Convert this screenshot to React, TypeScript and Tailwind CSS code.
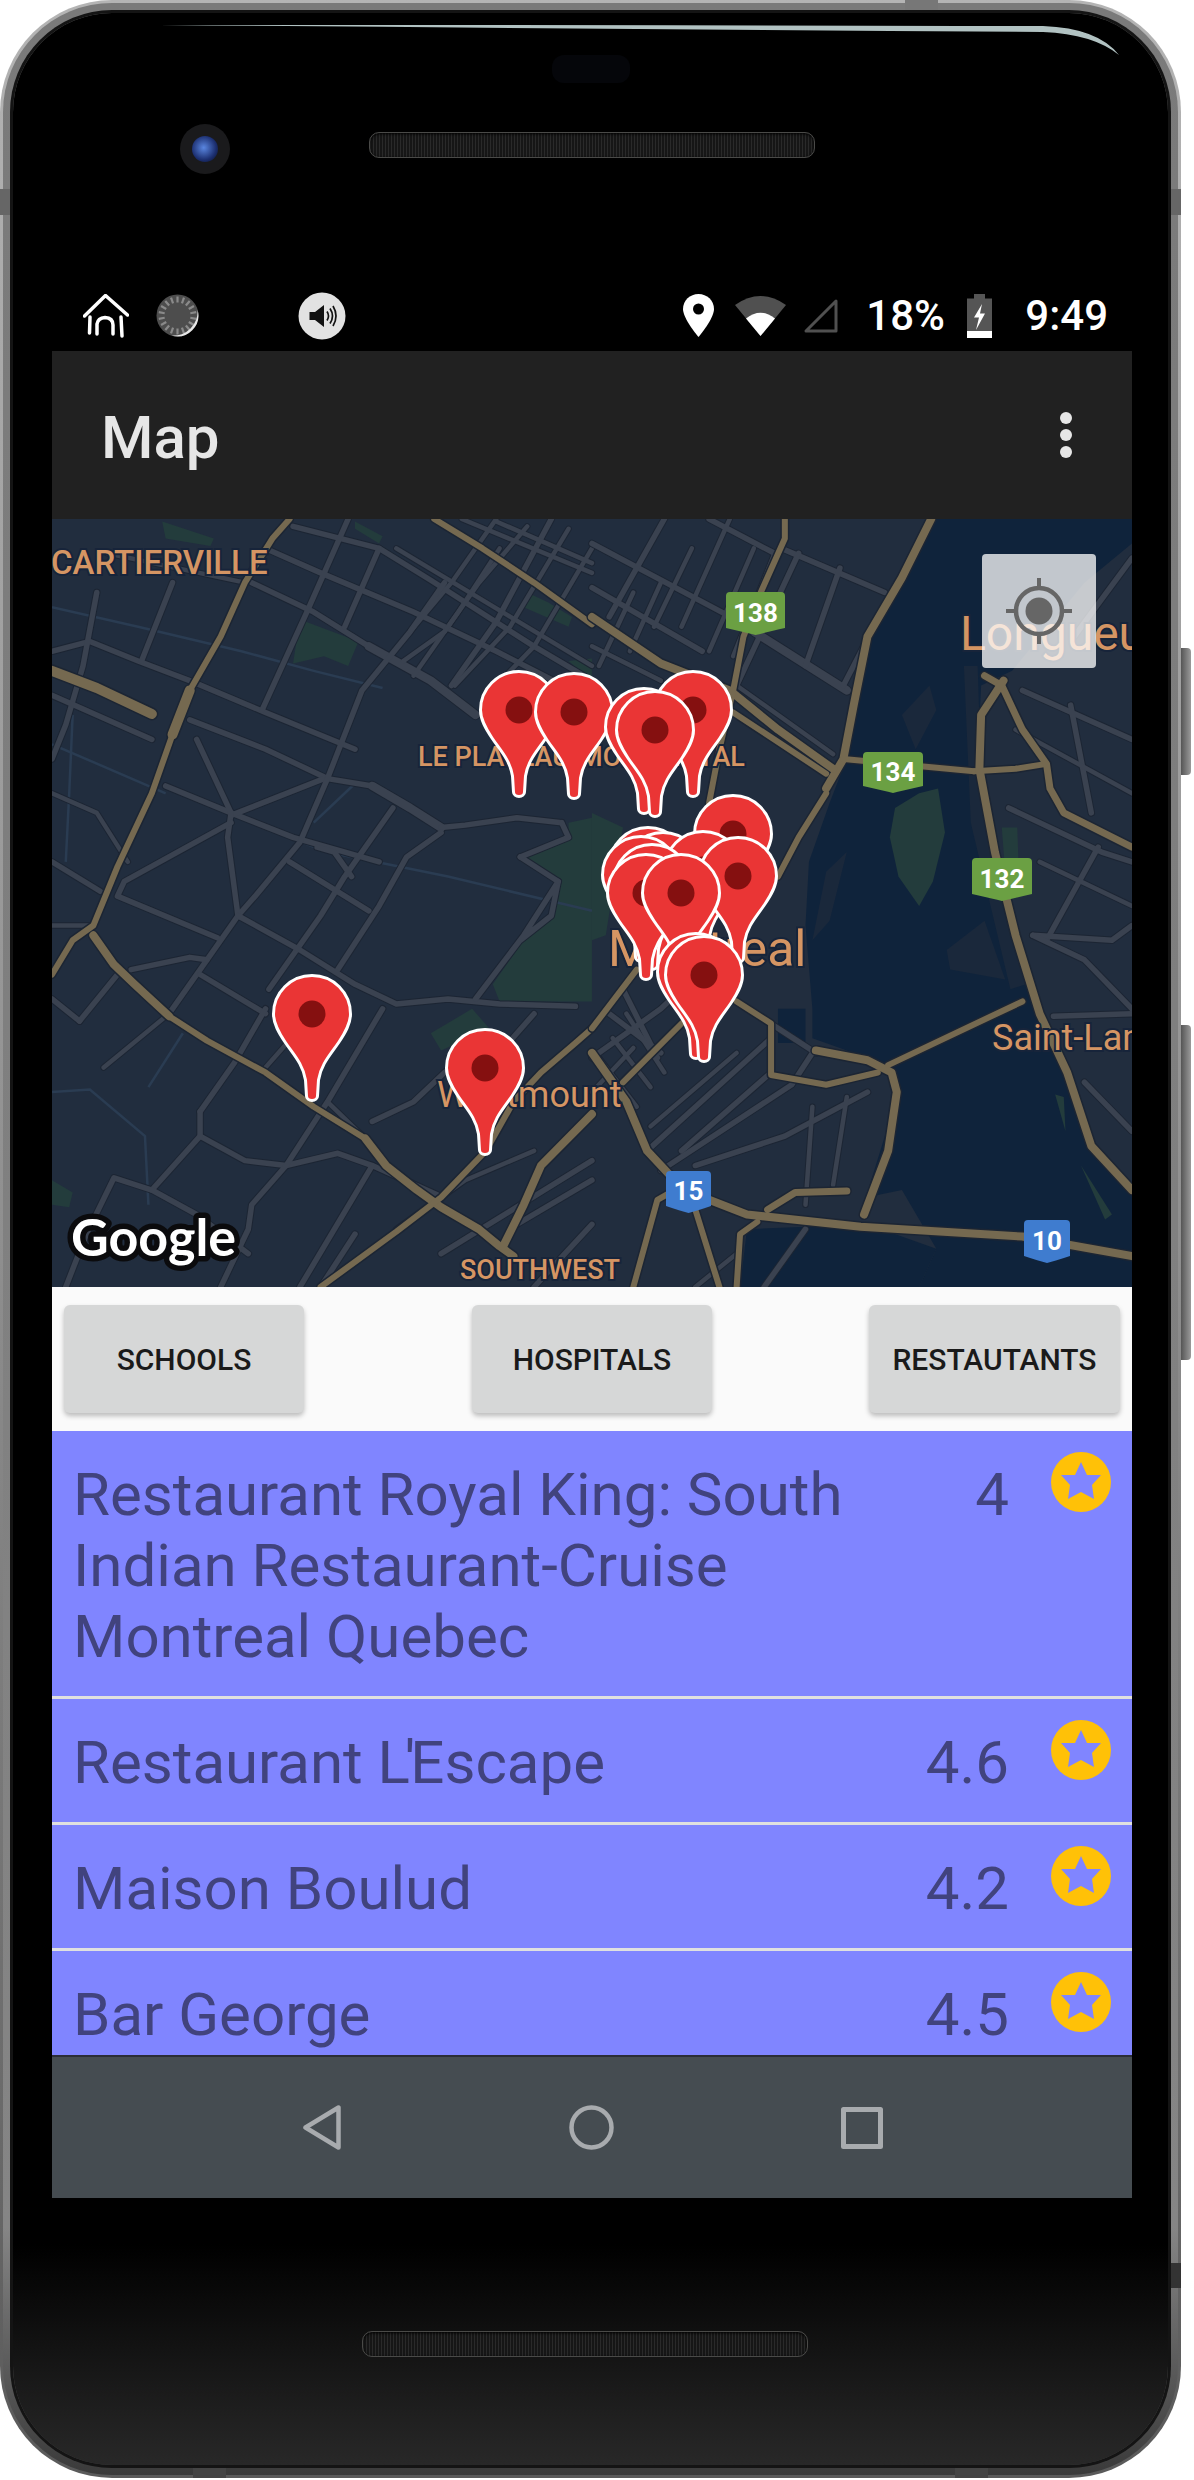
import React from "react";

const LAND = "#212d3e";
const ROAD = "#3a4250";
const HIGHWAY = "#756950";
const LABEL = "#d59563";
const HALO = "#17243a";

// traced from the map, one set per half of the map
const LEFT_PARKS = [
  "720,205 890,250 860,300 790,280 700,295",
  "1380,150 1440,170 1510,200 1500,220 1370,180",
  "320,5 470,40 460,55 330,40",
  "880,5 960,35 950,50 880,20",
  "1500,620 1568,610 1568,985 1300,985 1280,950 1370,860 1450,810 1478,740 1370,690 1500,650",
  "1100,1050 1220,1000 1270,1040 1130,1085",
  "0,1350 60,1375 50,1405 0,1400",
  "1500,290 1568,285 1568,330",
];

const LEFT_THIN = [
  "0,180 250,220 550,270 760,310 960,345",
  "0,460 330,560",
  "540,610 800,680 1150,730 1568,800",
  "0,1170 110,1165 270,1260 280,1400",
  "60,400 50,560 40,700",
  "760,620 880,540",
  "380,1050 280,1160",
];

const LEFT_ROADS: [number, string][] = [
  [4, "0,270 110,250 250,290 400,330 620,395 880,470"],
  [4, "400,410 620,470 800,530 930,545"],
  [7, "930,545 1040,590 1130,630"],
  [4, "1130,630 1200,625 1350,610 1480,620"],
  [4, "330,545 520,600 700,650 950,700"],
  [4, "520,605 790,530"],
  [4, "580,130 760,190 920,260"],
  [7, "920,260 1100,330 1230,400"],
  [4, "620,60 780,110 1050,190 1290,270 1568,370"],
  [4, "700,15 950,60 1100,125 1400,260 1568,330"],
  [4, "950,60 850,220"],
  [4, "860,0 740,190 610,390"],
  [4, "1450,0 1290,210 1160,340"],
  [4, "1140,130 1040,230 900,350 800,530 720,660 590,770 540,810 450,900 340,1010"],
  [4, "990,590 850,730 780,810 630,960"],
  [4, "1130,640 1030,690 950,790 830,920"],
  [4, "420,450 520,600 510,650 540,810"],
  [4, "520,620 210,740 190,770 480,855"],
  [4, "540,810 720,880 880,950 1000,990 1150,980 1300,990 1520,995"],
  [4, "770,670 820,680 870,730"],
  [4, "690,700 920,800"],
  [4, "230,920 400,895 450,900"],
  [4, "430,930 620,1010"],
  [4, "80,1025 0,980"],
  [4, "80,1025 190,930"],
  [4, "430,1260 560,1310 680,1320 830,1295 930,1320 1120,1380"],
  [4, "430,1210 530,1110 620,1000"],
  [4, "430,1210 430,1260 290,1370 180,1345 100,1460 40,1568"],
  [4, "290,1370 420,1420 570,1500"],
  [4, "960,1000 800,1190 680,1320 580,1400 570,1450 490,1568"],
  [4, "930,1320 720,1568"],
  [4, "930,1230 1050,1190 1140,1130"],
  [4, "1400,1010 1300,1090 1250,1180"],
  [4, "1230,980 1370,850 1470,740 1450,810 1360,860"],
  [4, "1360,690 1470,740"],
  [4, "1360,690 1500,650 1480,620"],
  [4, "0,700 140,760"],
  [4, "130,150 90,300 40,420 0,490"],
  [4, "350,130 260,290"],
  [4, "0,360 290,450"],
  [4, "780,1568 880,1460"],
  [4, "1130,1500 1568,1310"],
  [4, "1400,1568 1568,1440"],
  [4, "1350,1440 1568,1350"],
  [3, "1290,0 1160,130 1040,230"],
  [3, "1300,60 1180,190 1050,320"],
  [3, "1568,60 1400,260 1290,340"],
  [3, "1500,20 1330,220 1170,340"],
  [3, "1380,15 1240,130 1140,230 1020,290"],
  [3, "1190,0 1568,110"],
  [3, "1290,5 1568,90"],
  [3, "1000,60 1568,300"],
  [3, "620,1120 720,1040"],
  [3, "800,1190 910,1265"],
  [3, "1140,1130 1230,1060"],
  [3, "160,70 560,130"],
  [3, "0,560 130,600 220,700"],
  [3, "340,1010 150,1120"],
  [3, "0,830 120,830"],
  [3, "1000,1450 1200,1350 1400,1290"],
];

const LEFT_HIGHWAYS: [number, string][] = [
  [4, "690,0 640,40 560,130 490,240 400,350"],
  [8, "400,350 350,440"],
  [4, "350,440 290,560 190,710 120,830 60,860 0,930"],
  [8, "0,310 130,345 290,398"],
  [6, "120,850 180,910 240,950 340,1015"],
  [4, "340,1015 450,1065 620,1130 760,1200 910,1265"],
  [6, "910,1265 970,1320 1060,1370 1130,1405 1240,1450 1300,1485 1340,1505"],
  [4, "1110,0 1250,60 1400,130 1568,215"],
  [4, "1568,1040 1520,1070 1420,1130 1340,1190 1260,1290 1130,1385 1000,1455 780,1568"],
  [6, "1568,1215 1420,1320 1370,1400 1310,1485"],
];

const RIGHT_WATER = [
  "990,0 1568,0 1568,50 1430,130 1220,310 1130,340 1120,500 1170,680 1230,860 1300,1010 1380,1130 1450,1280 1568,1370 1568,1568 950,1568 1000,1490 900,1370 830,1380 780,1420 890,1170 870,1120 720,1080 640,1060 640,1000 620,830 630,700 690,580 750,470 800,240",
  "430,1568 450,1450 800,1440 1000,1490 950,1568",
  "540,1000 620,1000 620,1070 540,1070",
];

const RIGHT_ISLANDS = [
  "1080,300 1120,300 1130,520 1190,760 1260,950 1215,960 1100,620",
  "1030,880 1140,820 1200,940 1040,920",
  "900,400 980,340 1000,390 940,470",
  "680,720 740,680 690,820 640,860",
];

const RIGHT_PARKS = [
  "880,590 950,560 1005,550 1025,640 990,740 950,790 890,730 865,650",
  "0,600 90,630 40,850 0,860",
  "1190,630 1235,630 1240,730 1200,720",
  "1345,1175 1370,1180 1375,1250",
  "1420,1320 1510,1420 1490,1430",
];

const RIGHT_ROADS: [number, string][] = [
  [4, "0,50 430,210 720,340"],
  [7, "470,230 740,350"],
  [4, "550,60 850,150"],
  [4, "340,0 530,70"],
  [4, "210,0 50,200"],
  [4, "600,70 500,220 420,340"],
  [4, "720,100 620,300"],
  [4, "870,150 730,340"],
  [4, "0,140 320,270"],
  [4, "0,1100 200,1000 260,960"],
  [4, "50,1010 200,1090"],
  [4, "90,960 190,1100"],
  [4, "160,1290 520,1060"],
  [4, "260,1290 520,1130"],
  [4, "200,1330 580,1155 640,1090"],
  [4, "300,1320 560,1260 800,1170"],
  [4, "420,985 650,1090"],
  [4, "1210,590 1480,680 1568,700"],
  [4, "1470,670 1320,860"],
  [4, "1280,850 1510,860 1568,830"],
  [4, "1280,850 1430,900 1568,1000"],
  [4, "1340,1015 1568,1010"],
  [4, "1250,350 1568,450"],
  [4, "1390,380 1450,600"],
  [4, "1430,1150 1568,1250"],
  [4, "500,1568 620,1450"],
  [4, "1568,80 1400,240"],
  [3, "120,150 20,300"],
  [3, "200,130 110,270"],
  [3, "290,60 180,220"],
  [3, "400,0 260,220"],
  [3, "470,60 340,270"],
  [3, "530,70 410,280"],
  [3, "0,260 200,330"],
  [3, "420,340 700,480"],
  [3, "0,1170 120,1080"],
  [3, "20,1100 130,1200"],
  [3, "60,1060 170,1160"],
  [3, "100,1010 210,1130"],
  [3, "170,1240 420,1090"],
  [3, "1230,430 1568,560"],
  [3, "1300,700 1568,790"],
  [3, "640,1200 620,1400"],
  [3, "740,1180 700,1360"],
  [3, "420,1500 300,1568"],
];

const RIGHT_HIGHWAYS: [number, string][] = [
  [6, "985,0 900,120 800,240 760,380 730,490 680,550"],
  [6, "0,200 200,295 400,350 540,430 700,510"],
  [4, "410,395 680,520"],
  [4, "560,0 560,40 490,150 440,240 410,350 370,470 340,580"],
  [4, "680,560 600,650 540,730"],
  [4, "730,490 1110,515"],
  [4, "1110,515 1230,510 1320,500"],
  [5, "1140,320 1190,340 1250,430 1320,500 1330,550 1370,600 1568,670"],
  [6, "1195,330 1130,400 1125,510 1170,680 1230,850 1300,1010 1380,1130 1450,1280 1568,1370"],
  [4, "420,985 520,1030 520,1135 680,1155 830,1130"],
  [6, "650,1085 800,1105 870,1130 885,1170 860,1290 790,1420"],
  [4, "860,1115 1250,985"],
  [6, "0,1090 100,1190 160,1290 240,1350 340,1390 450,1420 780,1445 1250,1465 1568,1505"],
  [5, "510,1410 590,1375 740,1372"],
  [4, "90,1150 260,1030"],
  [4, "0,1040 130,920"],
  [4, "120,1568 190,1390 240,1370"],
  [4, "300,1410 370,1568"],
  [4, "420,1568 430,1460 480,1435"],
];

const PINS: [number, number][] = [
  [312, 1014], [485, 1068],
  [519, 710], [693, 710], [574, 712], [644, 727], [655, 730],
  [733, 834], [648, 866], [663, 871], [703, 870], [641, 875], [738, 876],
  [652, 883], [646, 893], [681, 893], [696, 972], [704, 975],
];

const SHIELDS: { x: number; y: number; w: number; h: number; label: string; color: string }[] = [
  { x: 674, y: 73, w: 59, h: 43, label: "138", color: "#6ba043" },
  { x: 811, y: 233, w: 60, h: 41, label: "134", color: "#6ba043" },
  { x: 920, y: 339, w: 60, h: 43, label: "132", color: "#6ba043" },
  { x: 614, y: 652, w: 45, h: 42, label: "15", color: "#3f7ccf" },
  { x: 972, y: 701, w: 46, h: 43, label: "10", color: "#3f7ccf" },
];

const PLACES: { x: number; y: number; size: number; weight: number; text: string }[] = [
  { x: -1, y: 55, size: 33, weight: 500, text: "CARTIERVILLE" },
  { x: 366, y: 247, size: 27, weight: 500, text: "LE PLATEAU-MONT-ROYAL" },
  { x: 908, y: 131, size: 48, weight: 400, text: "Longueuil" },
  { x: 556, y: 447, size: 50, weight: 400, text: "Montreal" },
  { x: 385, y: 588, size: 36, weight: 400, text: "Westmount" },
  { x: 940, y: 531, size: 36, weight: 400, text: "Saint-Lambert" },
  { x: 408, y: 760, size: 27, weight: 500, text: "SOUTHWEST" },
];

const RESTAURANTS: { key: string; name: React.ReactNode; rating: string }[] = [
  { key: "royal", name: "Restaurant Royal King: South Indian Restaurant-Cruise Montreal Quebec", rating: "4" },
  { key: "escape", name: <>Restaurant <span className="tracking-[-5px]">L'</span>Escape</>, rating: "4.6" },
  { key: "boulud", name: "Maison Boulud", rating: "4.2" },
  { key: "george", name: "Bar George", rating: "4.5" },
];

function Lines({ list, color, extra }: { list: [number, string][]; color: string; extra: number }) {
  return (
    <>
      {list.map(([w, pts], i) => (
        <polyline key={i} points={pts} fill="none" stroke={color} strokeWidth={w + extra} strokeLinecap="round" strokeLinejoin="round" vectorEffect="non-scaling-stroke" />
      ))}
    </>
  );
}

function Pin({ x, y }: { x: number; y: number }) {
  return (
    <g transform={`translate(${x - 52} ${y - 519})`}>
      <path
        d="M0-38.5C21.3-38.5 38.5-21.3 38.5 0C38.5 10 33 19 27 28C19 40 9 50 6.5 66L5.5 82A5.5 4.5 0 0 1-5.5 82L-6.5 66C-9 50-19 40-27 28C-33 19-38.5 10-38.5 0C-38.5-21.3-21.3-38.5 0-38.5Z"
        fill="#ea3535"
        stroke="#fff"
        strokeWidth="3"
      />
      <circle r="13.5" fill="#851010" />
    </g>
  );
}

function MapCanvas() {
  return (
    <svg viewBox="0 0 1080 768" className="block w-full h-full">
      <rect width="1080" height="768" fill={LAND} />
      <g transform="scale(0.34435 0.4898)">
        {LEFT_PARKS.map((p, i) => <polygon key={i} points={p} fill="#233c3c" />)}
        {LEFT_THIN.map((p, i) => (
          <polyline key={i} points={p} fill="none" stroke="#2a3c52" strokeWidth="2.500" vectorEffect="non-scaling-stroke" />
        ))}
        <Lines list={LEFT_ROADS} color="#1c2533" extra={3.5} />
        <Lines list={LEFT_ROADS} color={ROAD} extra={1.5} />
        <Lines list={LEFT_HIGHWAYS} color="#1c2533" extra={5} />
        <Lines list={LEFT_HIGHWAYS} color={HIGHWAY} extra={2} />
      </g>
      <g transform="translate(540 0) scale(0.34435 0.4898)">
        {RIGHT_WATER.map((p, i) => <polygon key={i} points={p} fill="#0f233b" />)}
        {RIGHT_ISLANDS.map((p, i) => <polygon key={i} points={p} fill="#1a283b" />)}
        {RIGHT_PARKS.map((p, i) => <polygon key={i} points={p} fill="#233c3c" />)}
        <Lines list={RIGHT_ROADS} color="#1c2533" extra={3.5} />
        <Lines list={RIGHT_ROADS} color={ROAD} extra={1.5} />
        <Lines list={RIGHT_HIGHWAYS} color="#1c2533" extra={5} />
        <Lines list={RIGHT_HIGHWAYS} color={HIGHWAY} extra={2} />
      </g>

      {PLACES.map((p) => (
        <text key={p.text} x={p.x} y={p.y} fontFamily="Roboto, sans-serif" fontSize={p.size} fontWeight={p.weight} fill={LABEL} stroke={HALO} strokeWidth="4" paintOrder="stroke">
          {p.text}
        </text>
      ))}

      {SHIELDS.map((s) => (
        <g key={s.label} transform={`translate(${s.x} ${s.y})`}>
          <path d={`M4 0H${s.w - 4}Q${s.w} 0 ${s.w} 4V${s.h - 7}Q${s.w / 2 + 8} ${s.h - 2} ${s.w / 2} ${s.h}Q${s.w / 2 - 8} ${s.h - 2} 0 ${s.h - 7}V4Q0 0 4 0Z`} fill={s.color} />
          <text x={s.w / 2} y={s.h / 2 + 8} textAnchor="middle" fontFamily="Roboto, sans-serif" fontSize="26" fontWeight="700" fill="#fff">
            {s.label}
          </text>
        </g>
      ))}

      <text x="19" y="737" fontFamily="Lato, sans-serif" fontSize="52" fontWeight="700" fill="#fff" stroke="#0b0b0d" strokeWidth="11" strokeLinejoin="round" paintOrder="stroke">
        Google
      </text>

      {PINS.map(([x, y], i) => <Pin key={i} x={x} y={y} />)}
    </svg>
  );
}

function HomeGlyph() {
  return (
    <svg width="46" height="44" viewBox="0 0 46 44" fill="none" stroke="#fff" strokeWidth="3.500" strokeLinecap="round" strokeLinejoin="round">
      <path d="M1.500 22 22.500 1.500 44.500 21" />
      <path d="M7 23 6.500 39M14 40V30Q15 24 22 23.500Q30 24 30 31V40M38 23 39 42" />
    </svg>
  );
}

function SpinnerGlyph() {
  const ticks = Array.from({ length: 18 }, (_, i) => i * 20);
  return (
    <svg width="43" height="43" viewBox="-21.500 -21.500 43 43">
      <circle r="21" fill="#4d4d4d" />
      {ticks.map((a) => (
        <line key={a} x1="0" y1="-13" x2="0" y2="-19" stroke="#8a8a8a" strokeWidth="2.200" transform={`rotate(${a})`} />
      ))}
      <path d="M20-6A21 21 0 0 1-6 20A24 24 0 0 0 20-6Z" fill="#e6e6e6" />
    </svg>
  );
}

function VolumeGlyph() {
  return (
    <svg width="48" height="48" viewBox="0 0 48 48">
      <circle cx="24" cy="24" r="23.500" fill="#e2e2e2" />
      <path d="M11.500 20H17L26 13V35L17 28H11.500Z" fill="#111" />
      <path d="M29 19.500Q32 24 29 28.500M32 16.500Q37 24 32 31.500M35 14Q41 24 35 34" fill="none" stroke="#111" strokeWidth="1.700" />
    </svg>
  );
}

function StatusIcons() {
  return (
    <>
      <svg width="31" height="43" viewBox="0 0 31 43" className="shrink-0">
        <path d="M15.500 0C7 0 0 6.500 0 15C0 25 15.500 43 15.500 43S31 25 31 15C31 6.500 24 0 15.500 0Z" fill="#fff" />
        <circle cx="15.500" cy="15" r="5.500" fill="#000" />
      </svg>
      <svg width="51" height="40" viewBox="0 0 51 40" className="ml-[21px] shrink-0">
        <path d="M25.500 40 0 9Q25.500-9 51 9Z" fill="#505050" />
        <path d="M25.500 40 11 22.500Q25.500 11 40 22.500Z" fill="#fff" />
      </svg>
      <svg width="35" height="35" viewBox="0 0 35 35" fill="none" className="ml-[17px] shrink-0">
        <path d="M33 3V33H3Z" stroke="#505050" strokeWidth="3" strokeLinejoin="round" />
      </svg>
    </>
  );
}

function BatteryGlyph() {
  return (
    <svg width="25" height="44" viewBox="0 0 25 44" className="ml-[24px] shrink-0">
      <path d="M7 0H18V4.500H25V37H0V4.500H7Z" fill="#555" />
      <rect y="37" width="25" height="7" fill="#fff" />
      <path d="M15 10 7 23.500H12L9 36 18 19.500H13Z" fill="#fff" />
    </svg>
  );
}

function StatusBar() {
  return (
    <div className="flex h-[63px] items-center pb-[8px] bg-black text-white text-[42px] leading-none">
      <div className="ml-[31px] shrink-0"><HomeGlyph /></div>
      <div className="ml-[27px] shrink-0"><SpinnerGlyph /></div>
      <div className="ml-[99px] shrink-0"><VolumeGlyph /></div>
      <div className="flex-1" />
      <StatusIcons />
      <span className="ml-[28px] w-[77px] font-medium">18%</span>
      <BatteryGlyph />
      <span className="ml-[33px] mr-[24px] font-medium">9:49</span>
    </div>
  );
}

function AppBar() {
  return (
    <div className="flex h-[168px] items-center justify-between bg-[#212121] pl-[49px] pr-[60px]">
      <span className="mt-[6px] text-[60px] font-medium leading-none text-[#e6e6e6]">Map</span>
      <div className="flex flex-col gap-[5px]">
        <div className="h-[12px] w-[12px] rounded-full bg-[#e6e6e6]" />
        <div className="h-[12px] w-[12px] rounded-full bg-[#e6e6e6]" />
        <div className="h-[12px] w-[12px] rounded-full bg-[#e6e6e6]" />
      </div>
    </div>
  );
}

function MapView() {
  return (
    <div className="relative h-[768px] overflow-hidden">
      <MapCanvas />
      <button className="absolute left-[930px] top-[35px] flex h-[114px] w-[114px] items-center justify-center rounded-[4px] bg-white/75">
        <svg width="66" height="66" viewBox="0 0 66 66" fill="none" stroke="#666">
          <circle cx="33" cy="33" r="23" strokeWidth="4.500" />
          <circle cx="33" cy="33" r="13.500" fill="#666" stroke="none" />
          <path d="M33 0V11M33 55V66M0 33H11M55 33H66" strokeWidth="4" />
        </svg>
      </button>
    </div>
  );
}

function FilterButton({ label, className }: { label: string; className: string }) {
  return (
    <button className={`flex h-[108px] items-center justify-center rounded-[6px] bg-[#d6d7d7] text-[30px] font-medium text-[#1a1a1a] shadow-[0_3px_5px_rgba(0,0,0,0.25)] ${className}`}>
      {label}
    </button>
  );
}

function Filters() {
  return (
    <div className="flex h-[144px] items-start bg-[#fafafa] pt-[18px]">
      <FilterButton label="SCHOOLS" className="ml-[12px] w-[240px]" />
      <FilterButton label="HOSPITALS" className="ml-[168px] w-[240px]" />
      <FilterButton label="RESTAUTANTS" className="ml-[157px] w-[251px]" />
    </div>
  );
}

function StarBadge() {
  return (
    <svg width="60" height="60" viewBox="0 0 60 60" className="ml-[42px] mt-[-7px] shrink-0">
      <circle cx="30" cy="30" r="30" fill="#ffc107" />
      <path d="M30 10 36 23H50L41 33 43 47 30 40 17 47 19 33 10 23H24Z" fill="#8085ff" />
    </svg>
  );
}

function RestaurantList() {
  return (
    <div className="h-[624px] overflow-hidden bg-[#8085ff]">
      {RESTAURANTS.map((r) => (
        <div key={r.key} className="flex border-b-[3px] border-[#e0e0e0] pb-[24px] pl-[21px] pr-[21px] pt-[28px] text-[60px] leading-[71px] text-[#41437e] last:border-b-0">
          <div className="flex-1">{r.name}</div>
          <div className="w-[152px] text-right">{r.rating}</div>
          <StarBadge />
        </div>
      ))}
    </div>
  );
}

function NavBar() {
  return (
    <div className="flex h-[143px] items-center border-t-[2px] border-[#2b2d38] bg-[#454c51]">
      <svg width="38" height="45" viewBox="0 0 38 45" fill="none" stroke="#a8abae" strokeWidth="4.500" strokeLinejoin="round" className="ml-[251px]">
        <path d="M35.500 2.500V42.500L2.500 22.500Z" />
      </svg>
      <svg width="45" height="45" viewBox="0 0 45 45" fill="none" stroke="#a8abae" strokeWidth="4.500" className="ml-[228px]">
        <circle cx="22.500" cy="22.500" r="20" />
      </svg>
      <svg width="42" height="42" viewBox="0 0 42 42" fill="none" stroke="#a8abae" strokeWidth="5" strokeLinejoin="round" className="ml-[227px]">
        <rect x="2.500" y="2.500" width="37" height="37" />
      </svg>
    </div>
  );
}

function Speaker() {
  return <div className="h-[26px] w-[446px] rounded-[10px] border border-[#4a4a48] bg-[repeating-linear-gradient(90deg,#2a2a2a_0,#2a2a2a_1px,#161616_1px,#161616_3px)] shadow-[inset_0_1px_3px_#000]" />;
}

function TopBezel() {
  return (
    <div className="relative h-[275px]">
      <svg width="1168" height="60" viewBox="0 0 1168 60" className="absolute left-0 top-0">
        <path d="M147 12Q700 12 1030 13Q1085 15 1106 42Q1080 21 1030 19Q600 16 147 12Z" fill="#b1c2c2" />
      </svg>
      <div className="absolute left-[539px] top-[42px] h-[28px] w-[78px] rounded-[12px] bg-[#05060a]" />
      <div className="absolute left-[167px] top-[111px] flex h-[50px] w-[50px] items-center justify-center rounded-full bg-[#1a1a1c]">
        <div className="h-[26px] w-[26px] rounded-full bg-[radial-gradient(circle_at_45%_45%,#5a86e0,#1c2f70_60%,#050a1c)]" />
      </div>
      <div className="absolute left-[356px] top-[119px]"><Speaker /></div>
    </div>
  );
}

function BottomBezel() {
  return (
    <div className="flex justify-start pl-[349px] pt-[133px]">
      <Speaker />
    </div>
  );
}

function Phone() {
  return (
    <div className="relative h-[2478px] w-[1181px] rounded-[112px] bg-[linear-gradient(180deg,#b4b4b4,#8f8f8f_50%,#5a5a5a)] p-[3px]">
      <div className="h-full rounded-[109px] bg-[linear-gradient(180deg,#7a7a7a,#858585_90%,#3a3a3a)] p-[10px]">
        <div className="h-full overflow-hidden rounded-[99px] bg-[linear-gradient(180deg,#000,#000_91%,#282828)] shadow-[0_0_0_3px_#141414] [font-family:Roboto,sans-serif]">
          <TopBezel />
          <div className="ml-[39px] w-[1080px]">
            <StatusBar />
            <AppBar />
            <MapView />
            <Filters />
            <RestaurantList />
            <NavBar />
          </div>
          <BottomBezel />
        </div>
      </div>
      {/* antenna lines on the metal band */}
      <div className="absolute left-0 top-[189px] h-[26px] w-[10px] bg-[#666]" />
      <div className="absolute right-0 top-[189px] h-[26px] w-[10px] bg-[#666]" />
      <div className="absolute left-[905px] top-0 h-[10px] w-[33px] bg-[#777]" />
      <div className="absolute bottom-0 left-[193px] h-[10px] w-[33px] bg-[#444]" />
      <div className="absolute bottom-0 left-[955px] h-[10px] w-[33px] bg-[#444]" />
      <div className="absolute right-0 top-[2263px] h-[25px] w-[10px] bg-[#333]" />
    </div>
  );
}

export default function App() {
  return (
    <div className="relative h-[2480px] w-[1194px] overflow-hidden bg-white">
      <Phone />
      {/* side keys */}
      <div className="absolute left-[1181px] top-[648px] h-[127px] w-[10px] rounded-r-[4px] bg-[linear-gradient(90deg,#555,#9a9a9a)]" />
      <div className="absolute left-[1181px] top-[1025px] h-[335px] w-[10px] rounded-r-[4px] bg-[linear-gradient(90deg,#555,#9a9a9a)]" />
    </div>
  );
}
